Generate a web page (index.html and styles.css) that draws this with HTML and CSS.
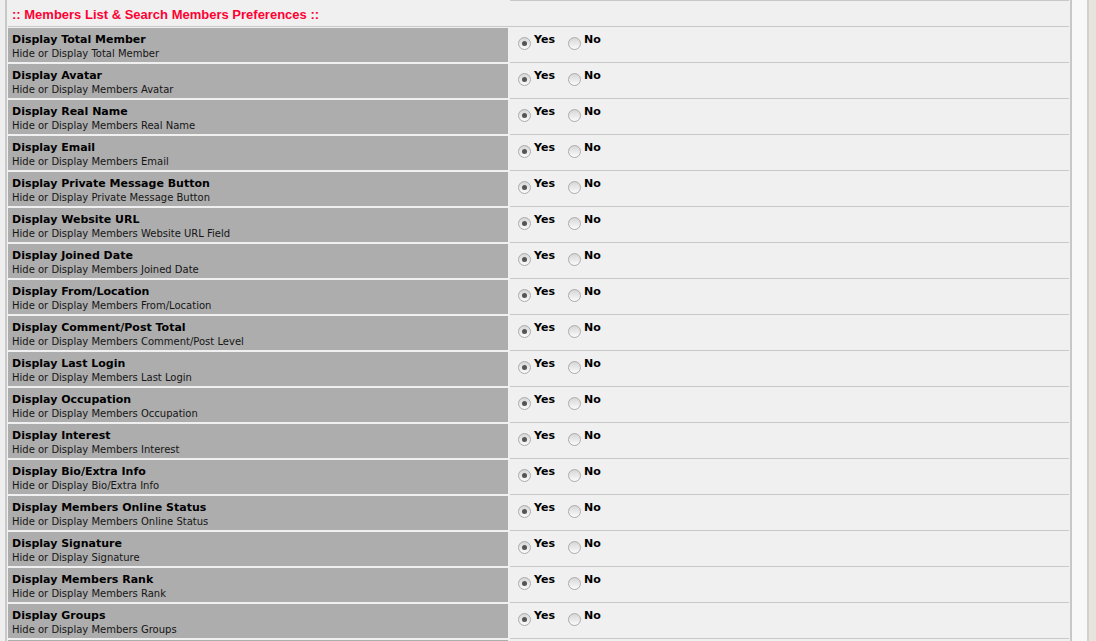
FILE: index.html
```html
<!DOCTYPE html>
<html>
<head>
<meta charset="utf-8">
<link rel="stylesheet" href="styles.css">
</head>
<body>
<div class="page">
  <div class="gutter"></div>
  <div class="main">
    <div class="row partial"><div class="label"></div><div class="value"></div></div>
    <div class="header">:: Members List &amp; Search Members Preferences ::</div>

    <div class="row"><div class="label"><div class="t">Display Total Member</div><div class="s">Hide or Display Total Member</div></div><div class="value"><label class="opt"><input type="radio" name="r1" checked>Yes</label><label class="opt"><input type="radio" name="r1">No</label></div></div>
    <div class="row"><div class="label"><div class="t">Display Avatar</div><div class="s">Hide or Display Members Avatar</div></div><div class="value"><label class="opt"><input type="radio" name="r2" checked>Yes</label><label class="opt"><input type="radio" name="r2">No</label></div></div>
    <div class="row"><div class="label"><div class="t">Display Real Name</div><div class="s">Hide or Display Members Real Name</div></div><div class="value"><label class="opt"><input type="radio" name="r3" checked>Yes</label><label class="opt"><input type="radio" name="r3">No</label></div></div>
    <div class="row"><div class="label"><div class="t">Display Email</div><div class="s">Hide or Display Members Email</div></div><div class="value"><label class="opt"><input type="radio" name="r4" checked>Yes</label><label class="opt"><input type="radio" name="r4">No</label></div></div>
    <div class="row"><div class="label"><div class="t">Display Private Message Button</div><div class="s">Hide or Display Private Message Button</div></div><div class="value"><label class="opt"><input type="radio" name="r5" checked>Yes</label><label class="opt"><input type="radio" name="r5">No</label></div></div>
    <div class="row"><div class="label"><div class="t">Display Website URL</div><div class="s">Hide or Display Members Website URL Field</div></div><div class="value"><label class="opt"><input type="radio" name="r6" checked>Yes</label><label class="opt"><input type="radio" name="r6">No</label></div></div>
    <div class="row"><div class="label"><div class="t">Display Joined Date</div><div class="s">Hide or Display Members Joined Date</div></div><div class="value"><label class="opt"><input type="radio" name="r7" checked>Yes</label><label class="opt"><input type="radio" name="r7">No</label></div></div>
    <div class="row"><div class="label"><div class="t">Display From/Location</div><div class="s">Hide or Display Members From/Location</div></div><div class="value"><label class="opt"><input type="radio" name="r8" checked>Yes</label><label class="opt"><input type="radio" name="r8">No</label></div></div>
    <div class="row"><div class="label"><div class="t">Display Comment/Post Total</div><div class="s">Hide or Display Members Comment/Post Level</div></div><div class="value"><label class="opt"><input type="radio" name="r9" checked>Yes</label><label class="opt"><input type="radio" name="r9">No</label></div></div>
    <div class="row"><div class="label"><div class="t">Display Last Login</div><div class="s">Hide or Display Members Last Login</div></div><div class="value"><label class="opt"><input type="radio" name="r10" checked>Yes</label><label class="opt"><input type="radio" name="r10">No</label></div></div>
    <div class="row"><div class="label"><div class="t">Display Occupation</div><div class="s">Hide or Display Members Occupation</div></div><div class="value"><label class="opt"><input type="radio" name="r11" checked>Yes</label><label class="opt"><input type="radio" name="r11">No</label></div></div>
    <div class="row"><div class="label"><div class="t">Display Interest</div><div class="s">Hide or Display Members Interest</div></div><div class="value"><label class="opt"><input type="radio" name="r12" checked>Yes</label><label class="opt"><input type="radio" name="r12">No</label></div></div>
    <div class="row"><div class="label"><div class="t">Display Bio/Extra Info</div><div class="s">Hide or Display Bio/Extra Info</div></div><div class="value"><label class="opt"><input type="radio" name="r13" checked>Yes</label><label class="opt"><input type="radio" name="r13">No</label></div></div>
    <div class="row"><div class="label"><div class="t">Display Members Online Status</div><div class="s">Hide or Display Members Online Status</div></div><div class="value"><label class="opt"><input type="radio" name="r14" checked>Yes</label><label class="opt"><input type="radio" name="r14">No</label></div></div>
    <div class="row"><div class="label"><div class="t">Display Signature</div><div class="s">Hide or Display Signature</div></div><div class="value"><label class="opt"><input type="radio" name="r15" checked>Yes</label><label class="opt"><input type="radio" name="r15">No</label></div></div>
    <div class="row"><div class="label"><div class="t">Display Members Rank</div><div class="s">Hide or Display Members Rank</div></div><div class="value"><label class="opt"><input type="radio" name="r16" checked>Yes</label><label class="opt"><input type="radio" name="r16">No</label></div></div>
    <div class="row"><div class="label"><div class="t">Display Groups</div><div class="s">Hide or Display Members Groups</div></div><div class="value"><label class="opt"><input type="radio" name="r17" checked>Yes</label><label class="opt"><input type="radio" name="r17">No</label></div></div>
    <div class="row"><div class="label"></div><div class="value"></div></div>
  </div>
</div>
</body>
</html>
```

FILE: styles.css
```css
html, body {
  margin: 0;
  padding: 0;
  height: 641px;
  overflow: hidden;
  background: #e6e4dc;
}

.page {
  display: flex;
  width: 1087px;
  height: 641px;
  background: #f8f8f8;
  border-right: 2px solid #d0d0d0;
  overflow: hidden;
}

.gutter {
  width: 5px;
  flex: none;
  background: #efefef;
}

.main {
  width: 1061px;
  flex: none;
  background: #f0f0f0;
  border-left: 2px solid #c8c8c8;
  border-right: 2px solid #c8c8c8;
  padding: 0 1px;
  margin-top: -34px;
}

.row {
  display: flex;
  height: 36px;
  align-items: flex-start;
  gap: 2px;
}

.label {
  width: 500px;
  height: 34px;
  flex: none;
  background: #adadad;
  box-sizing: border-box;
  padding: 5px 4px 0;
  font-family: "DejaVu Sans", Verdana, sans-serif;
  color: #000;
}

.t {
  font-weight: bold;
  font-size: 11px;
  line-height: 14px;
}

.s {
  font-size: 10px;
  line-height: 14px;
  color: #151515;
}

.value {
  flex: 1;
  height: 35px;
  box-sizing: border-box;
  border-bottom: 1px solid #c8c8c8;
  display: flex;
  align-items: flex-start;
  padding: 5px 0 0 8px;
}

.header {
  height: 24px;
  box-sizing: border-box;
  border-bottom: 1px solid #c8c8c8;
  margin: 1px 0 1px;
  padding: 4px 0 0 4px;
  font-family: "Liberation Sans", Arial, sans-serif;
  font-weight: bold;
  font-size: 13px;
  line-height: 16px;
  color: #ff0033;
}

.opt {
  display: flex;
  align-items: flex-start;
  margin-right: 13px;
  font-family: "DejaVu Sans", Verdana, sans-serif;
  font-weight: bold;
  font-size: 11px;
  line-height: 14px;
  color: #000;
}

.opt input {
  -webkit-appearance: none;
  appearance: none;
  width: 13px;
  height: 13px;
  margin: 4px 3px 0 0;
  border: 1px solid #acacac;
  border-radius: 50%;
  background: linear-gradient(#d6d6d6, #fbfbfb);
  box-sizing: border-box;
  position: relative;
}

.opt input:checked::after {
  content: "";
  position: absolute;
  left: 3px;
  top: 3px;
  width: 5px;
  height: 5px;
  border-radius: 50%;
  background: #555;
}
```
